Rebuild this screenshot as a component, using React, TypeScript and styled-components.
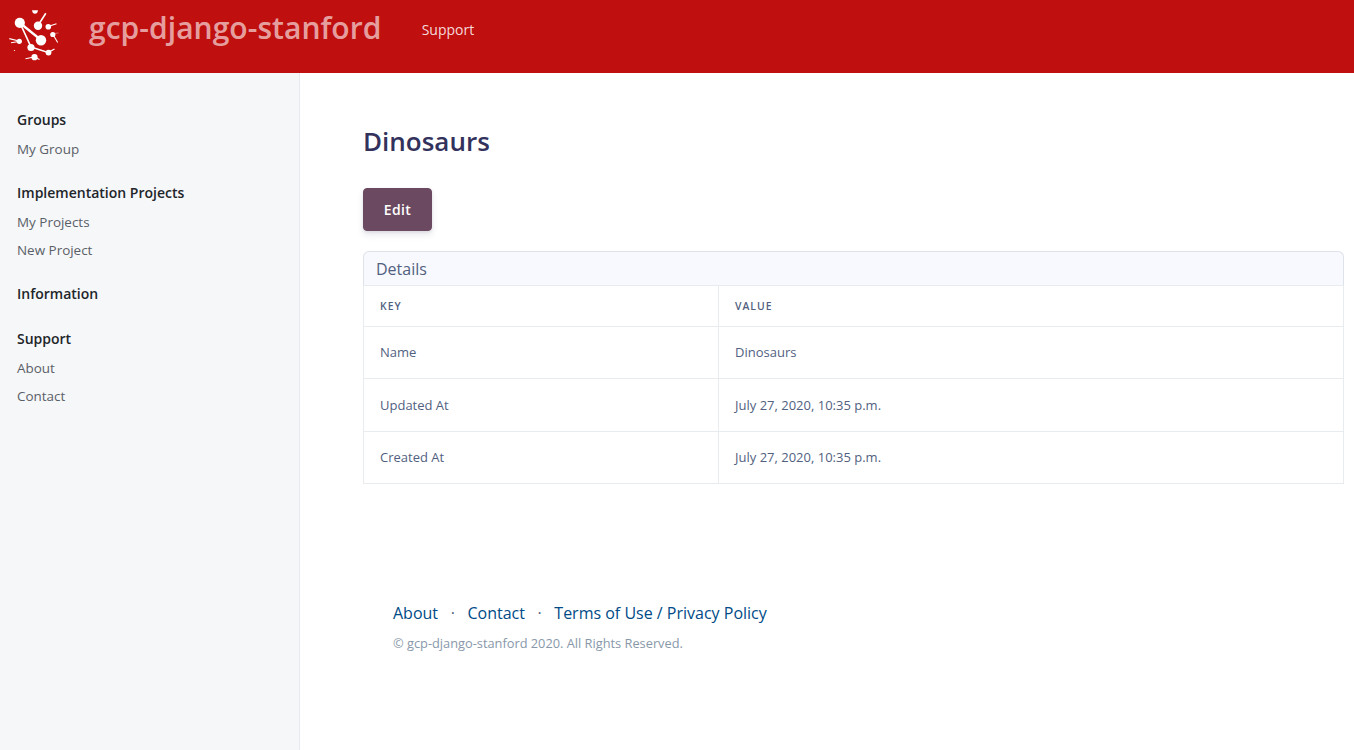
import React from 'react';
import styled, { createGlobalStyle } from 'styled-components';

const GlobalStyle = createGlobalStyle`
  *, *::before, *::after { box-sizing: border-box; }
  body {
    margin: 0;
    background: #fff;
    color: #525f7f;
    font-family: 'Open Sans', sans-serif;
    font-size: 16px;
    line-height: 1.5;
  }
  a { text-decoration: none; }
`;

const Page = styled.div`
  display: flex;
  flex-direction: column;
  height: 750px;
  overflow: hidden;
`;

const Header = styled.header`
  display: flex;
  align-items: flex-start;
  flex: none;
  height: 73px;
  padding-left: 9px;
  background: #bf100f;
`;

const Logo = styled.svg`
  display: block;
  width: 50px;
  height: 51px;
  margin-top: 10px;
`;

const Brand = styled.a`
  width: 293px;
  margin: 7px 0 0 30px;
  color: rgba(255, 255, 255, 0.62);
  font-size: 30px;
  font-weight: 600;
  letter-spacing: 0.04px;
  line-height: 42px;
  white-space: nowrap;
`;

const NavLink = styled.a`
  margin: 19px 0 0 39.7px;
  color: rgba(255, 255, 255, 0.85);
  font-size: 14px;
  line-height: 21px;
`;

const Body = styled.div`
  display: flex;
  flex: 1;
`;

const Sidebar = styled.aside`
  flex: none;
  width: 300px;
  padding: 33px 17px 0;
  background: #f6f7f9;
  border-right: 1px solid #e6eaf0;
`;

const NavGroup = styled.nav`
  display: flex;
  flex-direction: column;
  margin-bottom: 16px;
`;

const GroupTitle = styled.a`
  height: 29px;
  color: #212529;
  font-size: 14px;
  font-weight: 600;
  line-height: 27px;
`;

const GroupLink = styled.a`
  height: 28px;
  color: #5a6067;
  font-size: 13.44px;
  line-height: 28px;
`;

const Main = styled.main`
  flex: 1;
  padding: 49px 10px 0 63px;
`;

const Title = styled.h1`
  margin: 0 0 27px;
  color: #32325d;
  font-size: 26px;
  font-weight: 600;
  line-height: 39px;
`;

const Button = styled.button`
  display: block;
  width: 69px;
  height: 43px;
  padding: 0;
  border: 1px solid #6b4a61;
  border-radius: 4px;
  background: #6b4a61;
  color: #fff;
  box-shadow: 0 4px 6px rgba(50, 50, 93, 0.11), 0 1px 3px rgba(0, 0, 0, 0.08);
  font: 600 14px/21px 'Open Sans', sans-serif;
  letter-spacing: 0.35px;
`;

const CardHeader = styled.div`
  height: 34px;
  margin-top: 20px;
  padding-left: 12px;
  border: 1px solid #dee2e9;
  border-bottom: 0;
  border-radius: 6px 6px 0 0;
  background: #f7f9fe;
  line-height: 35px;
`;

const Table = styled.div`
  border: 1px solid #e9ecef;
  border-bottom: 0;
`;

const Row = styled.div<{ $height: number; $head?: boolean }>`
  display: grid;
  grid-template-columns: 355px 1fr;
  height: ${(p) => p.$height}px;
  border-bottom: 1px solid #e9ecef;
  font-size: ${(p) => (p.$head ? '10.4px' : '13px')};
  font-weight: ${(p) => (p.$head ? 600 : 400)};
  letter-spacing: ${(p) => (p.$head ? '1px' : 'normal')};
  text-transform: ${(p) => (p.$head ? 'uppercase' : 'none')};
`;

const Cell = styled.div`
  display: flex;
  align-items: center;
  padding: 1px 0 0 16px;

  &:first-child { border-right: 1px solid #e9ecef; }
`;

const Footer = styled.footer`
  margin: 117px 0 0 30px;
`;

const FooterLinks = styled.div`
  display: flex;
  align-items: center;
  gap: 12.6px;
  height: 24px;
`;

const FooterLink = styled.a`
  color: #004b87;
`;

const Copyright = styled.div`
  margin-top: 8px;
  color: #8898aa;
  font-size: 12.8px;
  line-height: 20px;
`;

const groups = [
  { title: 'Groups', links: ['My Group'] },
  { title: 'Implementation Projects', links: ['My Projects', 'New Project'] },
  { title: 'Information', links: [] },
  { title: 'Support', links: ['About', 'Contact'] },
];

const rows = [
  { label: 'Name', value: 'Dinosaurs', height: 52 },
  { label: 'Updated At', value: 'July 27, 2020, 10:35 p.m.', height: 53 },
  { label: 'Created At', value: 'July 27, 2020, 10:35 p.m.', height: 52 },
];

const NetworkLogo = () => (
  <Logo viewBox="9 10 50 51" fill="#fff" stroke="none">
    <g stroke="#fff" strokeLinecap="butt" fill="none">
      <path d="M20 23L41 40" strokeWidth="2.3" />
      <path d="M20 23L31 47" strokeWidth="1.7" />
      <path d="M31 47L48 52.5L54.5 49" strokeWidth="1.4" />
      <path d="M38 25.5L45.8 13.2" strokeWidth="1.6" />
      <path d="M48 26.5L56.5 23.7M53 34.5L57.7 42.5" strokeWidth="1.1" />
      <path d="M19 41L9.3 38.6M19 41.5L11 42.8M25.5 58.7L34 57L39.5 59.4" strokeWidth="1.1" />
      <path d="M54 33.5L58.5 33" strokeWidth="0.4" />
    </g>
    <circle cx="19.8" cy="22.8" r="5.1" />
    <circle cx="41" cy="40.2" r="5.2" />
    <circle cx="38" cy="25.7" r="4.2" />
    <circle cx="31" cy="47.5" r="3.6" />
    <circle cx="48.3" cy="26.7" r="2.8" />
    <circle cx="52.8" cy="34.5" r="2.6" />
    <circle cx="19.3" cy="41.3" r="2.6" />
    <circle cx="48.5" cy="52.6" r="2.9" />
    <circle cx="34.5" cy="57.2" r="3.1" />
    <path d="M32 10.2H38Q37.5 13.7 35 13.7Q32.5 13.7 32 10.2Z" />
    <circle cx="14.5" cy="50.5" r="0.6" />
  </Logo>
);

export default function App() {
  return (
    <Page>
      <GlobalStyle />
      <Header>
        <NetworkLogo />
        <Brand>gcp-django-stanford</Brand>
        <NavLink>Support</NavLink>
      </Header>
      <Body>
        <Sidebar>
          {groups.map((group) => (
            <NavGroup key={group.title}>
              <GroupTitle>{group.title}</GroupTitle>
              {group.links.map((link) => (
                <GroupLink key={link}>{link}</GroupLink>
              ))}
            </NavGroup>
          ))}
        </Sidebar>
        <Main>
          <Title>Dinosaurs</Title>
          <Button>Edit</Button>
          <CardHeader>Details</CardHeader>
          <Table>
            <Row $height={41} $head>
              <Cell>Key</Cell>
              <Cell>Value</Cell>
            </Row>
            {rows.map((row) => (
              <Row key={row.label} $height={row.height}>
                <Cell>{row.label}</Cell>
                <Cell>{row.value}</Cell>
              </Row>
            ))}
          </Table>
          <Footer>
            <FooterLinks>
              <FooterLink>About</FooterLink>
              <span>·</span>
              <FooterLink>Contact</FooterLink>
              <span>·</span>
              <FooterLink>Terms of Use / Privacy Policy</FooterLink>
            </FooterLinks>
            <Copyright>© gcp-django-stanford 2020. All Rights Reserved.</Copyright>
          </Footer>
        </Main>
      </Body>
    </Page>
  );
}
